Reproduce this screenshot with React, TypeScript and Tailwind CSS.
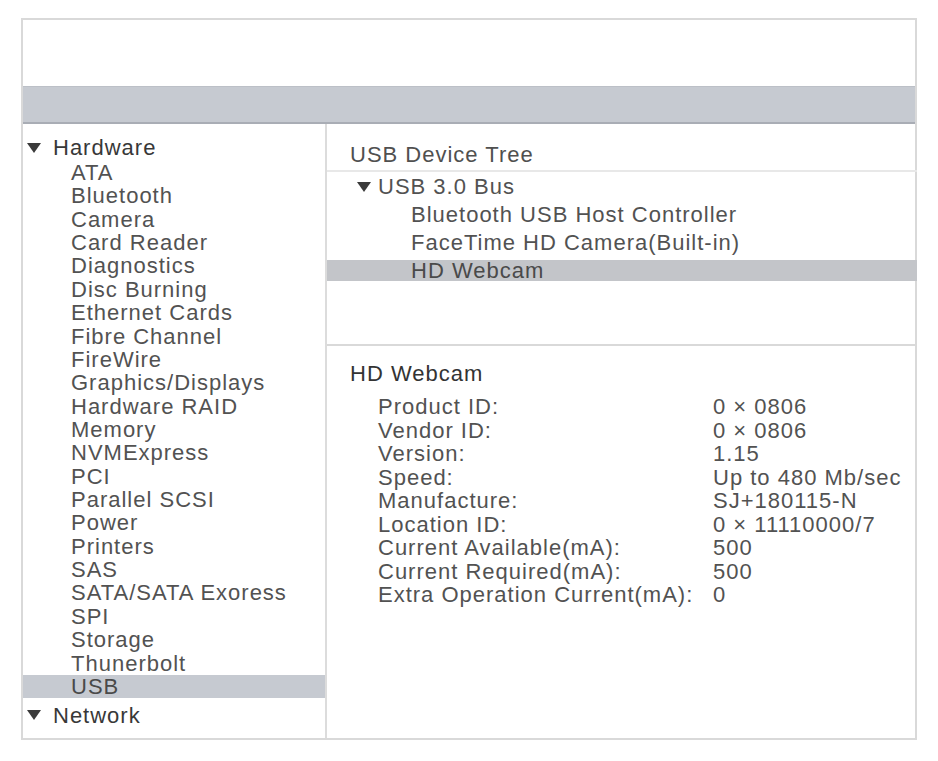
import React from "react";

const font = { fontFamily: '"Liberation Sans", Arial, sans-serif' };

function Tri({ className = "" }: { className?: string }) {
  return (
    <svg width="14" height="10" viewBox="0 0 14 10" className={className}>
      <path d="M0 0 L14 0 L7 10 Z" fill="#3a3a3a" />
    </svg>
  );
}

const hardware = [
  "ATA",
  "Bluetooth",
  "Camera",
  "Card Reader",
  "Diagnostics",
  "Disc Burning",
  "Ethernet Cards",
  "Fibre Channel",
  "FireWire",
  "Graphics/Displays",
  "Hardware RAID",
  "Memory",
  "NVMExpress",
  "PCI",
  "Parallel SCSI",
  "Power",
  "Printers",
  "SAS",
  "SATA/SATA Exoress",
  "SPI",
  "Storage",
  "Thunerbolt",
  "USB",
];

const details: [string, string][] = [
  ["Product ID:", "0 × 0806"],
  ["Vendor ID:", "0 × 0806"],
  ["Version:", "1.15"],
  ["Speed:", "Up to 480 Mb/sec"],
  ["Manufacture:", "SJ+180115-N"],
  ["Location ID:", "0 × 11110000/7"],
  ["Current Available(mA):", "500"],
  ["Current Required(mA):", "500"],
  ["Extra Operation Current(mA):", "0"],
];

export default function App() {
  return (
    <div
      className="w-[938px] h-[761px] bg-white overflow-hidden text-[22px] tracking-[1px] text-[#525252]"
      style={font}
    >
      <div className="ml-[21px] mt-[18px] w-[896px] h-[722px] border-2 border-[#d9d9d9] flex flex-col box-border">
        <div className="h-[66px] bg-white" />
        <div className="h-[38px] box-border bg-[#c6cad1] border-t border-t-[#bcc0c7] border-b-2 border-b-[#a9adb5]" />
        <div className="flex-1 flex min-h-0">
          {/* Sidebar */}
          <div className="w-[304px] box-border border-r-2 border-[#dcdcdc] pt-[11px] flex flex-col">
            <div className="h-[26px] flex items-center pl-[4px] text-[#383838]">
              <Tri />
              <span className="ml-[12px] leading-[26px]">Hardware</span>
            </div>
            {hardware.map((h) => (
              <div
                key={h}
                className={
                  "h-[23.36px] leading-[23.36px] pl-[48px] whitespace-nowrap " +
                  (h === "USB" ? "bg-[#c6cad1] text-[#4a4a4a]" : "")
                }
              >
                {h}
              </div>
            ))}
            <div className="h-[34px] flex items-center pl-[4px] text-[#383838]">
              <Tri />
              <span className="ml-[12px]">Network</span>
            </div>
          </div>

          {/* Right */}
          <div className="flex-1 flex flex-col mr-[-2px]">
            <div className="h-[222px] box-border border-b-2 border-[#d9d9d9] flex flex-col">
              <div className="h-[48px] box-border border-b-2 border-[#e8e8e8] pt-[19px] pl-[23px] leading-[24px] text-[#505050]">
                USB Device Tree
              </div>
              <div className="pt-[4px] flex flex-col gap-[7px]">
                <div className="h-[21px] flex items-center pl-[30px]">
                  <Tri />
                  <span className="ml-[7px] leading-[21px]">USB 3.0 Bus</span>
                </div>
                <div className="h-[21px] leading-[21px] pl-[84px] whitespace-nowrap">
                  Bluetooth USB Host Controller
                </div>
                <div className="h-[21px] leading-[21px] pl-[84px] whitespace-nowrap">
                  FaceTime HD Camera(Built-in)
                </div>
                <div className="h-[21px] leading-[21px] pl-[84px] whitespace-nowrap bg-[#c3c5c9] text-[#4a4a4a]">
                  HD Webcam
                </div>
              </div>
            </div>
            <div className="flex-1 pt-[16px] pl-[23px]">
              <div className="leading-[24px] text-[#333333]">HD Webcam</div>
              <div className="mt-[9px] pl-[28px] grid grid-cols-[335px_1fr]">
                {details.map(([k, v]) => (
                  <React.Fragment key={k}>
                    <div className="leading-[23.5px] whitespace-nowrap">{k}</div>
                    <div className="leading-[23.5px] whitespace-nowrap">{v}</div>
                  </React.Fragment>
                ))}
              </div>
            </div>
          </div>
        </div>
      </div>
    </div>
  );
}
